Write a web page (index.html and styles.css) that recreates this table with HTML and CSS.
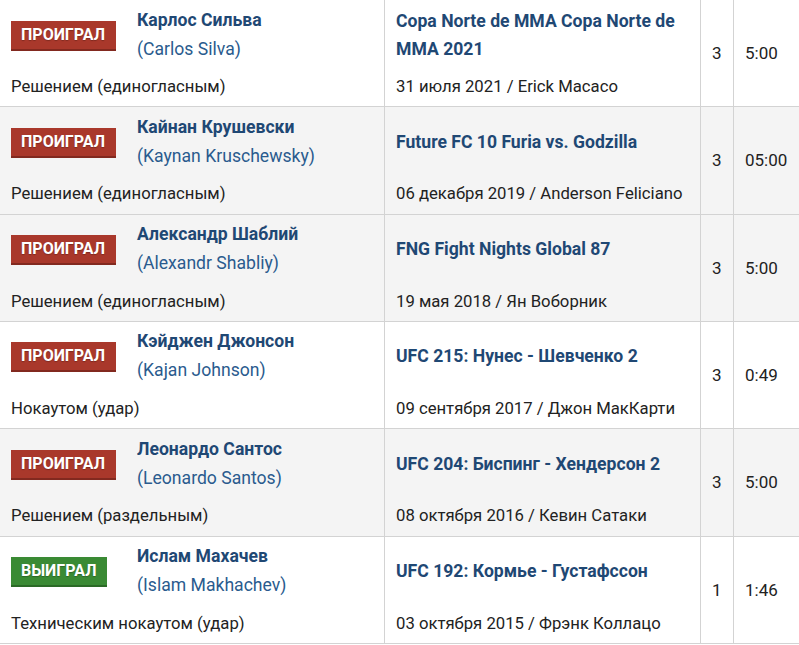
FILE: index.html
```html
<!DOCTYPE html>
<html lang="ru">
<head>
<meta charset="utf-8">
<title>Бои</title>
<link rel="stylesheet" href="styles.css">
</head>
<body>
<table class="fights">
  <colgroup>
    <col class="c-fighter"><col class="c-event"><col class="c-round"><col class="c-time">
  </colgroup>
  <tbody>
    <tr class="row">
      <td class="cell main">
        <div class="top">
          <div class="badge-wrap"><span class="badge loss">Проиграл</span></div>
          <div class="names"><a class="name">Карлос Сильва</a><span class="orig">(Carlos Silva)</span></div>
        </div>
        <div class="bottom">Решением (единогласным)</div>
      </td>
      <td class="cell main">
        <div class="top"><a class="event">Copa Norte de MMA Copa Norte de MMA 2021</a></div>
        <div class="bottom">31 июля 2021 / Erick Macaco</div>
      </td>
      <td class="cell num">3</td>
      <td class="cell num">5:00</td>
    </tr>
    <tr class="row alt">
      <td class="cell main">
        <div class="top">
          <div class="badge-wrap"><span class="badge loss">Проиграл</span></div>
          <div class="names"><a class="name">Кайнан Крушевски</a><span class="orig">(Kaynan Kruschewsky)</span></div>
        </div>
        <div class="bottom">Решением (единогласным)</div>
      </td>
      <td class="cell main">
        <div class="top"><a class="event">Future FC 10 Furia vs. Godzilla</a></div>
        <div class="bottom">06 декабря 2019 / Anderson Feliciano</div>
      </td>
      <td class="cell num">3</td>
      <td class="cell num">05:00</td>
    </tr>
    <tr class="row alt">
      <td class="cell main">
        <div class="top">
          <div class="badge-wrap"><span class="badge loss">Проиграл</span></div>
          <div class="names"><a class="name">Александр Шаблий</a><span class="orig">(Alexandr Shabliy)</span></div>
        </div>
        <div class="bottom">Решением (единогласным)</div>
      </td>
      <td class="cell main">
        <div class="top"><a class="event">FNG Fight Nights Global 87</a></div>
        <div class="bottom">19 мая 2018 / Ян Воборник</div>
      </td>
      <td class="cell num">3</td>
      <td class="cell num">5:00</td>
    </tr>
    <tr class="row">
      <td class="cell main">
        <div class="top">
          <div class="badge-wrap"><span class="badge loss">Проиграл</span></div>
          <div class="names"><a class="name">Кэйджен Джонсон</a><span class="orig">(Kajan Johnson)</span></div>
        </div>
        <div class="bottom">Нокаутом (удар)</div>
      </td>
      <td class="cell main">
        <div class="top"><a class="event">UFC 215: Нунес - Шевченко 2</a></div>
        <div class="bottom">09 сентября 2017 / Джон МакКарти</div>
      </td>
      <td class="cell num">3</td>
      <td class="cell num">0:49</td>
    </tr>
    <tr class="row alt">
      <td class="cell main">
        <div class="top">
          <div class="badge-wrap"><span class="badge loss">Проиграл</span></div>
          <div class="names"><a class="name">Леонардо Сантос</a><span class="orig">(Leonardo Santos)</span></div>
        </div>
        <div class="bottom">Решением (раздельным)</div>
      </td>
      <td class="cell main">
        <div class="top"><a class="event">UFC 204: Биспинг - Хендерсон 2</a></div>
        <div class="bottom">08 октября 2016 / Кевин Сатаки</div>
      </td>
      <td class="cell num">3</td>
      <td class="cell num">5:00</td>
    </tr>
    <tr class="row">
      <td class="cell main">
        <div class="top">
          <div class="badge-wrap"><span class="badge win">Выиграл</span></div>
          <div class="names"><a class="name">Ислам Махачев</a><span class="orig">(Islam Makhachev)</span></div>
        </div>
        <div class="bottom">Техническим нокаутом (удар)</div>
      </td>
      <td class="cell main">
        <div class="top"><a class="event">UFC 192: Кормье - Густафссон</a></div>
        <div class="bottom">03 октября 2015 / Фрэнк Коллацо</div>
      </td>
      <td class="cell num">1</td>
      <td class="cell num">1:46</td>
    </tr>
  </tbody>
</table>
</body>
</html>
```
FILE: styles.css
```css
html, body {
  margin: 0;
  padding: 0;
  background: #ffffff;
}

body {
  font-family: Roboto, "Liberation Sans", Arial, sans-serif;
  font-size: 16.7px;
  color: #222222;
}

.fights {
  border-collapse: separate;
  border-spacing: 0;
  table-layout: fixed;
  width: 800px;
}

.c-fighter { width: 385px; }
.c-event { width: 316px; }
.c-round { width: 33px; }
.c-time { width: 66px; }

.row { height: 107.33px; }
.row.alt { background: #f4f4f4; }

.cell {
  border-right: 1px solid #d3d3d3;
  border-bottom: 1px solid #d3d3d3;
  padding: 0 11px;
}

.cell:last-child { border-right: none; }

.main {
  vertical-align: top;
  padding-top: 1px;
}

.num {
  vertical-align: middle;
  font-size: 17px;
  white-space: nowrap;
}

.top {
  height: 67px;
  display: flex;
  align-items: center;
}

.bottom {
  margin-top: 5px;
  line-height: 28px;
  white-space: nowrap;
}

.badge-wrap {
  width: 126px;
  flex: none;
}

.badge {
  display: inline-block;
  height: 28px;
  line-height: 28px;
  padding: 0 11px 0 10px;
  color: #ffffff;
  font-weight: 700;
  font-size: 16px;
  text-transform: uppercase;
  text-shadow: 0 1px 1px rgba(0, 0, 0, 0.25);
}

.badge.loss {
  background: #a9382b;
  box-shadow: 0 2px 0 #82291f;
}

.badge.win {
  background: #3a8a34;
  box-shadow: 0 2px 0 #2b6a26;
}

.names {
  display: flex;
  flex-direction: column;
  font-size: 17.6px;
  line-height: 29px;
}

.name {
  font-weight: 700;
  color: #1f4874;
}

.orig {
  color: #2a5b8e;
}

.event {
  font-weight: 700;
  font-size: 17.6px;
  color: #1f4874;
  line-height: 28px;
}
```
